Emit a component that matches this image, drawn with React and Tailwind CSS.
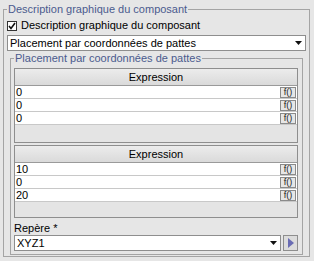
import React from "react";

function FButton() {
  return (
    <div className="w-[16px] h-[11px] border border-[#8a8a8a] bg-[#e6e6e6] flex items-center justify-center text-[9px] leading-[9px] text-[#222]">
      f()
    </div>
  );
}

function ExpressionTable({ values, height }) {
  return (
    <div className={`border border-[#8e8e8e] bg-[#e4e4e4] ${height}`}>
      <div className="h-[17px] border-b border-[#9a9a9a] bg-gradient-to-b from-[#ececec] to-[#dadada] flex items-center justify-center">
        Expression
      </div>
      {values.map((v, i) => (
        <div key={i} className="h-[13px] flex items-center border-b border-[#c8c8c8] bg-white">
          <div className="flex-1 pl-[1px] leading-[12px]">{v}</div>
          <FButton />
          <div className="w-[1px]" />
        </div>
      ))}
    </div>
  );
}

function Combo({ label, className }) {
  return (
    <div className={`h-[16px] border border-[#8e8e8e] bg-white flex items-center pl-[2px] pr-[3px] ${className}`}>
      <span className="flex-1">{label}</span>
      <svg width="7" height="4" viewBox="0 0 7 4">
        <path d="M0 0 H7 L3.5 4 Z" fill="#111" />
      </svg>
    </div>
  );
}

export default function App() {
  return (
    <div className="w-[314px] h-[261px] bg-[#e6e6e6] font-['Liberation_Sans',Arial,sans-serif] text-[11px] leading-[13px] text-black pt-[3px] pl-[3px]">
      <fieldset className="w-[307px] border border-[#a4a4a4] px-[3px] pb-[1px]">
        <legend className="px-[1px] text-[#4b5b8e] leading-[13px]">Description graphique du composant</legend>
        <div className="mt-[1px] h-[17px] flex items-center gap-[4px]">
          <div className="w-[10px] h-[10px] border border-[#333] bg-white flex items-center justify-center">
            <svg width="8" height="8" viewBox="0 0 8 8">
              <path d="M1 4 L3 6.5 L7 1" stroke="#111" strokeWidth="1.6" fill="none" />
            </svg>
          </div>
          <span>Description graphique du composant</span>
        </div>
        <Combo label="Placement par coordonnées de pattes" className="mt-[1px]" />
        <fieldset className="mt-[1px] mx-[3px] border border-[#a4a4a4] pl-[3px] pr-[4px] pb-[3px]">
          <legend className="px-[1px] text-[#4b5b8e] leading-[13px]">Placement par coordonnées de pattes</legend>
          <div className="mt-[3px]">
            <ExpressionTable values={["0", "0", "0"]} height="h-[75px]" />
          </div>
          <div className="mt-[2px]">
            <ExpressionTable values={["10", "0", "20"]} height="h-[73px]" />
          </div>
          <div className="mt-[4px] leading-[13px]">Repère *</div>
          <div className="flex gap-[2px]">
            <Combo label="XYZ1" className="flex-1" />
            <div className="w-[15px] h-[16px] border border-[#8e8e8e] bg-[#dcdcdc] flex items-center justify-center">
              <svg width="6" height="10" viewBox="0 0 6 10">
                <path d="M0 0 L6 5 L0 10 Z" fill="#6a6cb4" />
              </svg>
            </div>
          </div>
        </fieldset>
      </fieldset>
    </div>
  );
}
